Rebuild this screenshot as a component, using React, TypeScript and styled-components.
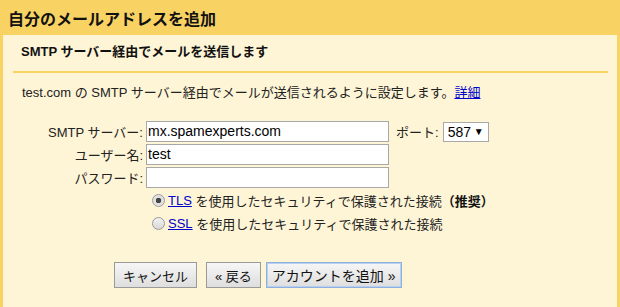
import styled, { createGlobalStyle } from 'styled-components';

const GlobalStyle = createGlobalStyle`
  html, body {
    margin: 0;
    padding: 0;
    background: #fef5d6;
  }
  body {
    font-family: 'Liberation Sans', 'Noto Sans CJK JP', sans-serif;
    font-size: 13px;
    color: #222;
  }
`;

function App() {
  return (
    <>
      <GlobalStyle />
      <Page>
        <Title>自分のメールアドレスを追加</Title>
        <Panel>
          <SectionHead>SMTP サーバー経由でメールを送信します</SectionHead>
          <Rule />
          <Desc>
            test.com の SMTP サーバー経由でメールが送信されるように設定します。<Link>詳細</Link>
          </Desc>

          <Form>
            <Label>SMTP サーバー:</Label>
            <Field value="mx.spamexperts.com" />
            <PortBox>
              <span>ポート:</span>
              <Select>
                587 <Arrow>▼</Arrow>
              </Select>
            </PortBox>

            <Label>ユーザー名:</Label>
            <Field value="test" />
            <span />

            <Label>パスワード:</Label>
            <Field value="" />
            <span />
          </Form>

          <Options>
            <Option>
              <Radio checked />
              <Link>TLS</Link>&nbsp;を使用したセキュリティで保護された接続<Strong>（推奨）</Strong>
            </Option>
            <Option>
              <Radio />
              <Link>SSL</Link>&nbsp;を使用したセキュリティで保護された接続
            </Option>
          </Options>

          <Buttons>
            <Button>キャンセル</Button>
            <Button $gap={9}>« 戻る</Button>
            <Button $gap={5} $primary>アカウントを追加 »</Button>
          </Buttons>
        </Panel>
      </Page>
    </>
  );
}

const Field = ({ value }: { value: string }) => <Input>{value}</Input>;

const Page = styled.div`
  display: flex;
  flex-direction: column;
  width: 620px;
  height: 307px;
  overflow: hidden;
`;

const Title = styled.div`
  height: 35px;
  display: flex;
  align-items: center;
  padding: 0 8px;
  background: #f9d264;
  font-weight: bold;
  font-size: 16px;
  color: #111;
`;

const Panel = styled.div`
  flex: 1;
  background: #fef5d6;
  border-left: 3px solid #f9d264;
  border-right: 3px solid #f9d264;
`;

const SectionHead = styled.div`
  padding: 9px 0 0 18px;
  height: 27px;
  line-height: 16px;
  font-weight: bold;
  color: #111;
`;

const Rule = styled.div`
  height: 2px;
  margin: 0 9px 0 10px;
  background: #f9d264;
`;

const Desc = styled.div`
  margin-top: 12px;
  padding-left: 19px;
  line-height: 16px;
`;

const Link = styled.span`
  color: #00c;
  text-decoration: underline;
`;

const Form = styled.div`
  display: grid;
  grid-template-columns: 140px 243px auto;
  column-gap: 3px;
  row-gap: 2px;
  margin-top: 20px;
  align-items: center;
`;

const Label = styled.div`
  text-align: right;
`;

const Input = styled.div`
  box-sizing: border-box;
  height: 21px;
  padding: 0 1px;
  line-height: 19px;
  font-size: 14px;
  background: #fff;
  border: 1px solid #a8a8a8;
  color: #000;
`;

const PortBox = styled.div`
  display: flex;
  align-items: center;
  gap: 4px;
  margin-left: 4px;
`;

const Select = styled.div`
  box-sizing: border-box;
  width: 46px;
  height: 20px;
  padding: 0 4px;
  display: flex;
  align-items: center;
  justify-content: space-between;
  font-size: 14px;
  background: #fff;
  border: 1px solid #a8a8a8;
  color: #000;
`;

const Arrow = styled.span`
  font-size: 10px;
`;

const Options = styled.div`
  display: flex;
  flex-direction: column;
  gap: 5px;
  margin-top: 3px;
  padding-left: 149px;
`;

const Option = styled.div`
  display: flex;
  align-items: center;
  height: 18px;
`;

const Radio = styled.span<{ checked?: boolean }>`
  box-sizing: border-box;
  width: 13px;
  height: 13px;
  margin-right: 3px;
  border-radius: 50%;
  border: 1px solid #9a9a9a;
  background: ${(p) =>
    p.checked
      ? 'radial-gradient(circle, #444 0 2.5px, #ddd 3px, #eee 100%)'
      : 'linear-gradient(#f2f2f2, #d8d8d8)'};
`;

const Strong = styled.b`
  color: #111;
`;

const Buttons = styled.div`
  display: flex;
  margin-top: 30px;
  padding-left: 111px;
`;

const Button = styled.div<{ $gap?: number; $primary?: boolean }>`
  box-sizing: border-box;
  height: 26px;
  padding: 0 ${(p) => (p.$primary ? 5 : 8)}px;
  margin-left: ${(p) => p.$gap ?? 0}px;
  display: flex;
  align-items: center;
  font-size: ${(p) => (p.$primary ? 14 : 13)}px;
  color: #111;
  background: linear-gradient(#f6f6f6, #dedede);
  border: 1px solid ${(p) => (p.$primary ? '#8eb0e0' : '#9a9a9a')};
  box-shadow: ${(p) => (p.$primary ? '0 0 0 1px #b9cff0 inset' : 'none')};
`;

export default App;
